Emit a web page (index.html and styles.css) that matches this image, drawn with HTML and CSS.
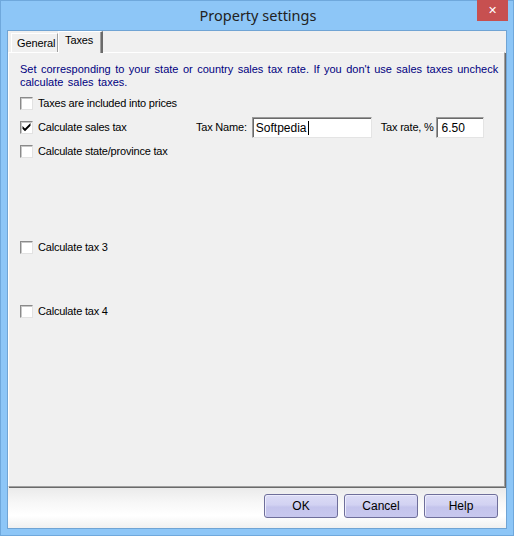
FILE: index.html
```html
<!DOCTYPE html>
<html>
<head>
<meta charset="utf-8">
<title>Property settings</title>
<link rel="stylesheet" href="styles.css">
</head>
<body>
<div class="frame">
  <div class="titlebar">
    <span class="title">Property settings</span>
    <span class="close">&#x2715;</span>
  </div>
  <div class="client">
    <div class="tabbar">
      <div class="tab">General</div>
      <div class="tab active">Taxes</div>
    </div>
    <div class="panel">
      <p class="intro">Set corresponding to your state or country sales tax rate. If you don't use sales taxes uncheck calculate sales taxes.</p>
      <div class="row">
        <span class="box"></span><span class="label">Taxes are included into prices</span>
      </div>
      <div class="row">
        <span class="box"><svg width="11" height="11" viewBox="0 0 11 11"><path d="M1.5 4 L4 6.5 L9.5 1 L9.5 3.8 L4 9.3 L1.5 6.8 Z" fill="#000"/></svg></span><span class="label wide">Calculate sales tax</span>
        <span class="flabel">Tax Name:</span><span class="field name">Softpedia<span class="caret"></span></span>
        <span class="flabel rate">Tax rate, %</span><span class="field num">6.50</span>
      </div>
      <div class="row">
        <span class="box"></span><span class="label">Calculate state/province tax</span>
      </div>
      <div class="row gap1">
        <span class="box"></span><span class="label">Calculate tax 3</span>
      </div>
      <div class="row gap2">
        <span class="box"></span><span class="label">Calculate tax 4</span>
      </div>
    </div>
    <div class="bottom">
      <button class="btn">OK</button>
      <button class="btn">Cancel</button>
      <button class="btn">Help</button>
    </div>
  </div>
</div>
</body>
</html>
```

FILE: styles.css
```css
html, body {
  margin: 0;
  padding: 0;
}
body {
  width: 514px;
  height: 536px;
  background: #8dc6f7;
  font-family: "Liberation Sans", Arial, sans-serif;
  font-size: 11px;
  color: #000;
}
.frame {
  box-sizing: border-box;
  width: 514px;
  height: 536px;
  border: 1px solid #6fa8dc;
  background: #8dc6f7;
  display: flex;
  flex-direction: column;
}
.titlebar {
  position: relative;
  height: 29px;
  display: flex;
  justify-content: center;
  align-items: flex-start;
}
.title {
  font-family: "Noto Sans", "Open Sans", sans-serif;
  font-size: 14.5px;
  color: #222;
  margin-top: 4px;
  margin-left: 2px;
}
.close {
  position: absolute;
  top: -1px;
  right: 5px;
  width: 31px;
  height: 21px;
  background: #c75050;
  color: #fff;
  font-family: "DejaVu Sans", sans-serif;
  font-size: 11px;
  font-weight: bold;
  display: flex;
  align-items: center;
  justify-content: center;
}
.client {
  box-sizing: border-box;
  margin: 0 6px 6px 6px;
  flex: 1;
  border: 1px solid #70a4d4;
  background: #f0f0f0;
  display: flex;
  flex-direction: column;
}
.tabbar {
  height: 21px;
  display: flex;
  align-items: flex-end;
  padding-left: 3px;
  position: relative;
  z-index: 2;
}
.tab {
  box-sizing: border-box;
  height: 19px;
  padding: 3px 0 0 5px;
  width: 47px;
  border-top: 1px solid #fff;
  border-left: 1px solid #fff;
  border-right: 1px solid #a0a0a0;
  background: #f0f0f0;
  font-size: 11px;
  letter-spacing: -0.1px;
}
.tab.active {
  height: 22px;
  width: 45px;
  padding: 2px 0 0 6px;
  margin-bottom: -1px;
  border-right: 2px solid #6a6a6a;
  box-shadow: inset -1px 0 #a0a0a0;
}
.panel {
  position: relative;
  flex: 1;
  margin-right: 1px;
  border-top: 1px solid #fff;
  border-left: 1px solid #fff;
  border-right: 1px solid #a0a0a0;
  border-bottom: 1px solid #a0a0a0;
  box-shadow: 1px 1px 0 #6a6a6a;
  padding: 10px 0 0 11px;
}
.intro {
  margin: 0 0 2px 0;
  color: #000080;
  line-height: 13px;
  width: 486px;
  letter-spacing: 0;
  word-spacing: 1.4px;
}
.row {
  position: relative;
  height: 24px;
  display: flex;
  align-items: center;
}
.row.gap1 {
  margin-top: 72px;
}
.row.gap2 {
  margin-top: 40px;
}
.box {
  box-sizing: border-box;
  width: 13px;
  height: 13px;
  background: #fff;
  border: 1px solid;
  border-color: #8a8a8a #e2e2e2 #e2e2e2 #8a8a8a;
  box-shadow: inset 1px 1px 0 #c8c8c8;
  display: flex;
  align-items: center;
  justify-content: center;
}
.box svg {
  display: block;
}
.label {
  margin-left: 5px;
  letter-spacing: -0.2px;
}
.label.wide {
  width: 158px;
}
.flabel {
  letter-spacing: -0.2px;
  margin-right: 5px;
}
.flabel.rate {
  margin-left: 9px;
  margin-right: 2px;
}
.field {
  box-sizing: border-box;
  height: 21px;
  background: #fff;
  border: 1px solid;
  border-color: #9a9a9a #e4e4e4 #e4e4e4 #9a9a9a;
  box-shadow: inset 1px 1px 0 #6a6a6a;
  padding: 3px 0 0 3px;
  font-size: 12px;
  display: flex;
  align-items: flex-start;
}
.field.name {
  width: 120px;
}
.field.num {
  width: 48px;
  padding-left: 5px;
}
.caret {
  display: inline-block;
  width: 1px;
  height: 14px;
  background: #000;
  margin-left: 1px;
}
.bottom {
  height: 41px;
  box-sizing: border-box;
  display: flex;
  justify-content: flex-end;
  align-items: flex-start;
  gap: 6px;
  padding: 7px 8px 0 0;
  background: linear-gradient(#eaeaea 0%, #f8f8f8 40%, #ffffff 70%, #f0f0f0 100%);
}
.btn {
  box-sizing: border-box;
  width: 74px;
  height: 24px;
  border: 1px solid #6e6e9a;
  border-radius: 3px;
  background: linear-gradient(#dcdcf6 0%, #d2d2f2 45%, #c4c4ec 55%, #c8c8ee 100%);
  box-shadow: inset 1px 1px 0 #ececfc;
  font-family: "Liberation Sans", Arial, sans-serif;
  font-size: 12px;
  color: #000;
  padding: 0;
}
```
